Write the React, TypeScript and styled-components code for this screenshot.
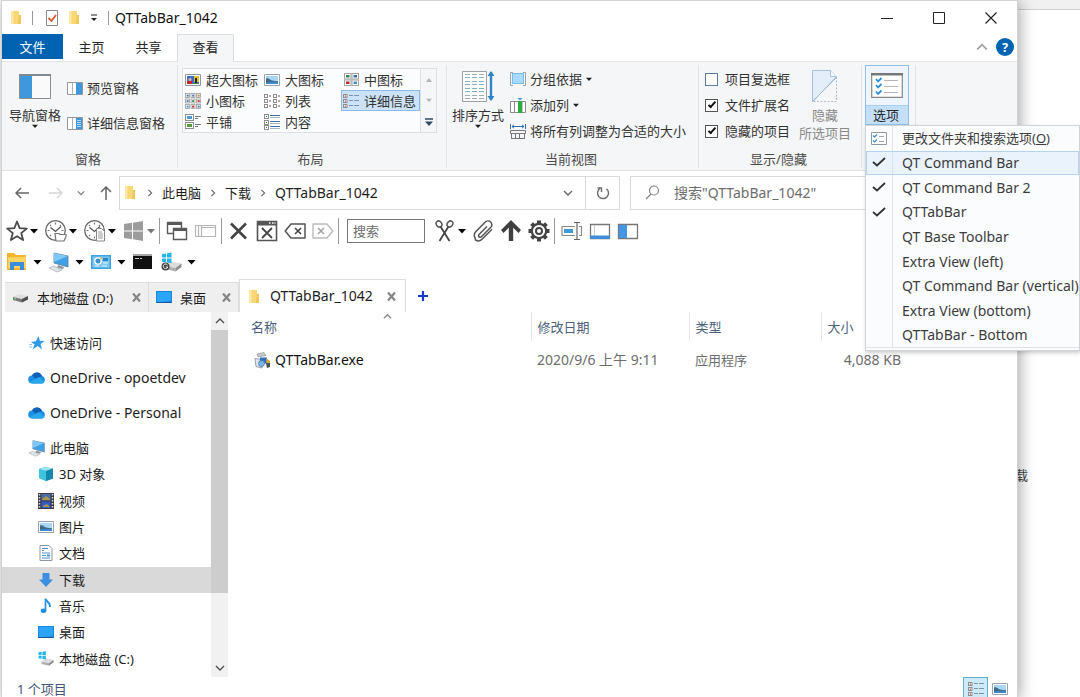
import React from "react";
import styled, { createGlobalStyle, css } from "styled-components";

const GlobalStyle = createGlobalStyle`
  *, *::before, *::after { box-sizing: border-box; }
  body {
    margin: 0;
    background: #fff;
    color: #262626;
    font-family: "Noto Sans", "Noto Sans CJK SC", sans-serif;
    font-size: 13px;
    line-height: 18px;
  }
  button, input { font: inherit; color: inherit; }
  button { border: 0; padding: 0; background: none; cursor: default; white-space: nowrap; }
  svg { display: block; flex: none; }
`;

/* ---------- frame ---------- */

const Desktop = styled.div`
  display: flex;
  height: 100vh;
  overflow: hidden;
  padding-left: 1px;
`;
const Window = styled.main`
  position: relative;
  z-index: 1;
  flex: 1;
  min-width: 0;
  display: flex;
  flex-direction: column;
  background: #fff;
  border: 1px solid #d2d2d2;
  border-bottom: 0;
  box-shadow: 2px 2px 14px rgba(0, 0, 0, 0.35);
`;
const Backdrop = styled.aside`
  width: 62px;
  display: flex;
  flex-direction: column;
  background: #fff;
`;
const BackdropBar = styled.div`
  height: 10px;
  background: #f1f1f1;
  border-bottom: 1px solid #cfcfcf;
`;
const BackdropText = styled.p`
  margin: 456px 0 0 -3px;
  color: #444;
`;

/* ---------- title bar ---------- */

const TitleBar = styled.header`
  display: flex;
  align-items: center;
  height: 33px;
  padding-left: 8px;
`;
const QuickAccess = styled.div`
  display: flex;
  align-items: center;
  gap: 10px;
`;
const TitleRule = styled.span`
  width: 1px;
  height: 14px;
  margin-right: 3px;
  background: #9a9a9a;
`;
const Title = styled.h1`
  margin: 0 auto 0 3px;
  font-size: 14px;
  font-weight: 400;
  color: #111;
`;
const CaptionButton = styled.button`
  display: grid;
  place-items: center;
  width: 52px;
  height: 33px;
`;

/* ---------- ribbon ---------- */

const RibbonTabs = styled.nav`
  display: flex;
  align-items: stretch;
  height: 28px;
  border-bottom: 1px solid #e3e4e5;
`;
const RibbonTab = styled.button<{ $kind?: "file" | "active" }>`
  width: 57px;
  height: 26px;
  ${(p) => p.$kind === "file" && css`
    width: 61px;
    height: 25px;
    background: #0063b1;
    color: #fff;
  `}
  ${(p) => p.$kind === "active" && css`
    height: 28px;
    padding-bottom: 3px;
    background: #f5f6f7;
    border: 1px solid #dcdddf;
    border-bottom: 0;
  `}
`;
const RibbonHelp = styled.div`
  display: flex;
  align-items: center;
  gap: 8px;
  margin-left: auto;
  padding: 0 3px 2px 0;
`;
const HelpButton = styled.button`
  width: 18px;
  height: 18px;
  border-radius: 50%;
  background: #0063b1;
  color: #fff;
  font-size: 13px;
  font-weight: 700;
  line-height: 18px;
`;
const Ribbon = styled.section`
  display: flex;
  height: 109px;
  padding: 3px 0 2px;
  background: #f5f6f7;
  border-bottom: 1px solid #dfe0e1;
`;
const Group = styled.div<{ $width: number }>`
  display: flex;
  flex-direction: column;
  justify-content: space-between;
  width: ${(p) => p.$width}px;
  border-right: 1px solid #e2e3e4;
`;
const GroupBody = styled.div<{ $pad?: number; $gap?: number }>`
  display: flex;
  align-items: flex-start;
  gap: ${(p) => p.$gap ?? 4}px;
  padding-left: ${(p) => p.$pad ?? 5}px;
`;
const GroupLabel = styled.h2`
  margin: 0;
  padding-right: 3px;
  font-size: 13px;
  font-weight: 400;
  text-align: center;
  color: #4a4a4a;
`;
const BigButton = styled.button<{ $dim?: boolean }>`
  display: flex;
  flex-direction: column;
  align-items: center;
  width: 56px;
  padding-top: 4px;
  color: ${(p) => (p.$dim ? "#8a8a8a" : "#333")};
`;
const BigIcon = styled.span`
  display: grid;
  place-items: center;
  height: 34px;
  margin-bottom: 3px;
`;
const SmallColumn = styled.div<{ $gap: number; $top: number }>`
  display: flex;
  flex-direction: column;
  align-items: flex-start;
  gap: ${(p) => p.$gap}px;
  padding-top: ${(p) => p.$top}px;
`;
const SmallButton = styled.button`
  display: flex;
  align-items: center;
  gap: 4px;
  height: 18px;
  color: #333;
`;
const Gallery = styled.div`
  display: flex;
  margin-top: 3px;
  border: 1px solid #dcdfe3;
  background: #fbfcfd;
`;
const GalleryGrid = styled.div`
  display: grid;
  grid-template-columns: repeat(3, 79px);
  grid-auto-rows: 21px;
`;
const GalleryItem = styled.button<{ $selected?: boolean }>`
  display: flex;
  align-items: center;
  gap: 5px;
  padding-left: 2px;
  color: #333;
  ${(p) => p.$selected && css`
    background: #cbe2f9;
    outline: 1px solid #8dbbe9;
    outline-offset: -1px;
  `}
`;
const GalleryScroll = styled.div`
  display: grid;
  grid-template-rows: repeat(3, 21px);
  width: 16px;
  border-left: 1px solid #dcdfe3;
  background: #f5f6f7;
  button { display: grid; place-items: center; }
`;
const CheckLabel = styled.label`
  display: flex;
  align-items: center;
  gap: 7px;
  height: 18px;
  color: #333;
`;
const CheckBox = styled.input`
  appearance: none;
  display: grid;
  place-items: center;
  width: 13px;
  height: 13px;
  margin: 0;
  border: 1px solid #5a7da0;
  background: #fff;
  &:checked { border-color: #555; }
  &:checked::after {
    content: "";
    width: 4px;
    height: 8px;
    margin-bottom: 2px;
    border: solid #111;
    border-width: 0 2px 2px 0;
    transform: rotate(42deg);
  }
`;
const OptionsAnchor = styled.div`
  position: relative;
  width: 44px;
`;
const OptionsButton = styled.button`
  display: flex;
  flex-direction: column;
  width: 44px;
  height: 60px;
  border: 1px solid #92bfea;
  background: #eef5fc;
`;
const OptionsIcon = styled.span`
  display: grid;
  place-items: center;
  width: 100%;
  height: 39px;
`;
const OptionsText = styled.span`
  width: 100%;
  height: 19px;
  padding-right: 2px;
  line-height: 18px;
  background: #c4dffa;
  border-top: 1px solid #a9cdf1;
`;
const Menu = styled.ul`
  position: absolute;
  z-index: 2;
  top: 100%;
  left: 0;
  display: grid;
  grid-template-rows: repeat(9, 1fr);
  width: 215px;
  height: 226px;
  margin: 0;
  padding: 0 0 2px;
  list-style: none;
  background: #fbfcfe;
  border: 1px solid #d0d4d8;
  box-shadow: 1px 2px 4px rgba(0, 0, 0, 0.2);
`;
const MenuItem = styled.li<{ $hot?: boolean }>`
  display: flex;
  outline: ${(p) => (p.$hot ? "1px solid #b5d3f0" : "0")};
  outline-offset: -1px;
  background: ${(p) => (p.$hot ? "#eaf2fb" : "transparent")};
  &:last-child { border-bottom: 1px solid #dfe2e6; }
`;
const MenuButton = styled.button<{ $latin?: boolean }>`
  display: flex;
  align-items: center;
  width: 100%;
  font-size: ${(p) => (p.$latin ? 14 : 13)}px;
  text-align: left;
  color: #3c3c3c;
`;
const MenuGutter = styled.span`
  display: grid;
  place-items: center;
  align-self: stretch;
  width: 27px;
  margin-right: 9px;
  border-right: 1px solid #dfe3e8;
`;

/* ---------- address row ---------- */

const AddressRow = styled.div`
  display: flex;
  align-items: center;
  height: 43px;
  padding: 0 8px 0 13px;
`;
const NavButtons = styled.div`
  display: flex;
  align-items: center;
  gap: 14px;
  margin-right: 6px;
  button:first-child { margin-right: 6px; }
`;
const AddressBox = styled.div`
  display: flex;
  align-items: center;
  flex: 1;
  height: 34px;
  padding-left: 4px;
  border: 1px solid #d9d9d9;
`;
const Crumbs = styled.div`
  display: flex;
  align-items: center;
  gap: 8px;
  flex: 1;
  padding-left: 10px;
  color: #1e1e1e;
`;
const Crumb = styled.span<{ $latin?: boolean }>`
  font-size: ${(p) => (p.$latin ? 14 : 13)}px;
`;
const AddressButton = styled.button<{ $divided?: boolean }>`
  display: grid;
  place-items: center;
  width: 34px;
  height: 32px;
  border-left: ${(p) => (p.$divided ? "1px solid #d9d9d9" : "0")};
`;
const SearchBox = styled.label`
  display: flex;
  align-items: center;
  gap: 14px;
  width: 379px;
  height: 34px;
  margin-left: 10px;
  padding-left: 14px;
  border: 1px solid #d9d9d9;
  font-size: 14px;
`;
const SearchInput = styled.input`
  flex: 1;
  min-width: 0;
  border: 0;
  padding: 0;
  outline: 0;
  background: none;
  &::placeholder { color: #6d6d6d; opacity: 1; }
`;

/* ---------- command bars ---------- */

const CommandBar = styled.div<{ $height: number; $gap?: number }>`
  display: flex;
  align-items: center;
  gap: ${(p) => p.$gap ?? 0}px;
  height: ${(p) => p.$height}px;
  padding-left: 4px;
`;
const ToolSet = styled.div<{ $gap: number }>`
  display: flex;
  align-items: center;
  gap: ${(p) => p.$gap}px;
`;
const ToolButton = styled.button<{ $gap?: number }>`
  display: flex;
  align-items: center;
  gap: ${(p) => p.$gap ?? 2}px;
  height: 24px;
`;
const ToolRule = styled.span`
  width: 1px;
  height: 26px;
  margin: 0 6px 0 4px;
  background: #9b9b9b;
`;
const ToolInput = styled.input`
  width: 78px;
  height: 24px;
  margin: 0 9px 0 2px;
  padding: 0 5px;
  border: 1px solid #777;
  background: #fff;
  &::placeholder { color: #6d6d6d; opacity: 1; }
`;

/* ---------- folder tabs ---------- */

const TabStrip = styled.div`
  display: flex;
  align-items: flex-end;
  height: 36px;
  padding-left: 3px;
`;
const FolderTab = styled.div<{ $width: number; $active?: boolean }>`
  display: flex;
  align-items: center;
  gap: ${(p) => (p.$active ? 10 : 8)}px;
  width: ${(p) => p.$width}px;
  height: ${(p) => (p.$active ? 33 : 30)}px;
  padding: 0 ${(p) => (p.$active ? "9px 0 8px" : "7px 0 7px")};
  background: ${(p) => (p.$active ? "#fff" : "#efefef")};
  border: 1px solid #dedede;
  border-bottom: 0;
  border-left-width: ${(p) => (p.$active ? 1 : 0)}px;
  font-size: ${(p) => (p.$active ? 14 : 13)}px;
  color: #1c1c1c;
`;
const TabName = styled.span`
  flex: 1;
  white-space: nowrap;
`;
const NewTab = styled.button`
  display: grid;
  place-items: center;
  width: 34px;
  height: 33px;
`;

/* ---------- body ---------- */

const Body = styled.div`
  display: flex;
  flex: 1;
  min-height: 0;
`;
const Sidebar = styled.nav`
  width: 209px;
  padding-top: 13px;
`;
const TreeList = styled.ul`
  margin: 0;
  padding: 0;
  list-style: none;
`;
const SubList = styled(TreeList)`
  display: grid;
  grid-template-rows: repeat(8, 1fr);
  height: 211px;
`;
const TreeItem = styled.a<{ $child?: boolean; $selected?: boolean; $latin?: boolean }>`
  display: flex;
  align-items: center;
  gap: ${(p) => (p.$child ? 5 : 4)}px;
  height: ${(p) => (p.$child ? "100%" : "35px")};
  padding-left: ${(p) => (p.$child ? 35 : 26)}px;
  background: ${(p) => (p.$selected ? "#d9d9d9" : "transparent")};
  font-size: ${(p) => (p.$latin ? 14 : 13)}px;
  color: #1c1c1c;
  text-decoration: none;
  white-space: nowrap;
`;
const LastRoot = styled.li`
  margin-bottom: -4px;
`;
const ScrollBar = styled.div`
  display: flex;
  flex-direction: column;
  width: 17px;
  background: #f1f1f1;
`;
const ScrollArrow = styled.button`
  display: grid;
  place-items: center;
  width: 17px;
  height: 18px;
`;
const ScrollThumb = styled.div`
  flex: 0 0 80%;
  background: #cdcdcd;
`;
const ScrollTrack = styled.div`
  display: flex;
  flex-direction: column;
  flex: 1;
`;
const Files = styled.section`
  flex: 1;
  min-width: 0;
`;
const FileTable = styled.table`
  width: 100%;
  table-layout: fixed;
  border-collapse: collapse;
`;
const HeadCell = styled.th<{ $width?: number; $first?: boolean }>`
  position: relative;
  width: ${(p) => (p.$width ? p.$width + "px" : "auto")};
  height: 29px;
  padding: 0 0 0 ${(p) => (p.$first ? 23 : 6)}px;
  border-right: ${(p) => (p.$width ? "1px solid #e5e5e5" : "0")};
  font-weight: 400;
  text-align: left;
  color: #4c607a;
`;
const SortMark = styled.span`
  position: absolute;
  top: 0;
  right: 139px;
`;
const Cell = styled.td<{ $right?: boolean; $first?: boolean; $latin?: boolean }>`
  height: 38px;
  padding: 0 6px 0 ${(p) => (p.$first ? 26 : 6)}px;
  font-size: ${(p) => (p.$latin ? 14 : 13)}px;
  text-align: ${(p) => (p.$right ? "right" : "left")};
  color: ${(p) => (p.$first ? "#111" : "#6d6d6d")};
  white-space: nowrap;
`;
const FileName = styled.span`
  display: flex;
  align-items: center;
  gap: 4px;
`;
const StatusBar = styled.footer`
  display: flex;
  align-items: flex-start;
  height: 20px;
  padding: 0 9px 0 15px;
  gap: 4px;
`;
const StatusText = styled.span`
  margin-right: auto;
  padding-top: 3px;
  color: #3f5573;
`;
const ViewButton = styled.button<{ $on?: boolean }>`
  display: grid;
  place-items: center;
  height: 24px;
  width: ${(p) => (p.$on ? 25 : 16)}px;
  border: ${(p) => (p.$on ? "1px solid #5fb0cf" : "0")};
  background: ${(p) => (p.$on ? "#cdebf7" : "none")};
`;

/* ---------- icons ---------- */

type SvgProps = { w: number; h?: number; box?: string; children: React.ReactNode };
const Svg = ({ w, h = w, box, children }: SvgProps) => (
  <svg width={w} height={h} viewBox={box ?? `0 0 ${w} ${h}`} fill="none" aria-hidden="true">
    {children}
  </svg>
);

const Caret = ({ color = "#000", size = 8 }: { color?: string; size?: number }) => (
  <Svg w={size} h={5} box="0 0 8 5"><path d="M0 0h8L4 4.6z" fill={color} /></Svg>
);
const MiniCaret = () => <Caret size={6} color="#222" />;
const Chevron = ({ dir, color = "#666", size = 10 }: { dir: "up" | "down" | "right"; color?: string; size?: number }) => (
  <Svg w={size} box="0 0 10 10">
    <path d={{ up: "M1 7l4-4 4 4", down: "M1 3l4 4 4-4", right: "M3 1l4 4-4 4" }[dir]} stroke={color} strokeWidth="1.4" />
  </Svg>
);
const FolderIcon = () => (
  <Svg w={12} h={15}>
    <path d="M1 1h8v4h2v9H1z" fill="#f8d775" />
    <path d="M1 1h2.5v13H1z" fill="#fbe7a6" />
    <path d="M9 5h2v9H8z" fill="#efc556" />
  </Svg>
);
const PropertiesIcon = () => (
  <Svg w={12} h={16}>
    <path d="M.5.5h11v15H.5z" fill="#fff" stroke="#8a8a8a" />
    <path d="M2.500 8l3 3 4.500-6" stroke="#d9532c" strokeWidth="1.800" />
  </Svg>
);
const CustomizeIcon = () => (
  <Svg w={8} h={8}><path d="M1 1h6" stroke="#222" /><path d="M1 4h6L4 7z" fill="#222" /></Svg>
);
const NavPaneIcon = () => (
  <Svg w={32} h={25}>
    <path d="M.5.5h31v24H.5z" fill="#fafafa" stroke="#8d8d8d" />
    <path d="M0 0h32v2H0z" fill="#7f8a92" />
    <path d="M1 2h12v22H1z" fill="#3f97dc" />
  </Svg>
);
const PaneIcon = ({ lines }: { lines?: boolean }) => (
  <Svg w={16} h={13}>
    <path d="M.5.5h15v12H.5z" fill="#fff" stroke="#8f989e" />
    <path d="M5.500 1v11" stroke="#a9b2b8" />
    <path d="M9 1h6v11H9z" fill="#3f97dc" />
    {lines && <path d="M10 3.500h4M10 5.500h4M10 7.500h4M10 9.500h4" stroke="#d4e9f9" strokeWidth=".8" />}
  </Svg>
);
const PictureIcon = () => (
  <Svg w={16} h={12}>
    <path d="M.5.5h15v11H.5z" fill="#fff" stroke="#98a2b3" />
    <path d="M2 2h12v8H2z" fill="#a9d6f5" />
    <path d="M2 4.500c3-1 4 1.500 6 2s4 .3 6 .8V9H2z" fill="#3d6b86" />
    <path d="M2 8.500c4-1 8-.5 12-.8V10H2z" fill="#3f86cc" />
  </Svg>
);
const ExtraLargeIcon = () => (
  <Svg w={16} h={12}>
    <path d="M.5.5h15v11H.5z" fill="#fff" stroke="#8a94a5" />
    <path d="M2 2h12v8H2z" fill="#3c6cc0" />
    <path d="M2 7h5v3H2z" fill="#c22a2a" />
    <circle cx="5" cy="5.500" r="1.500" fill="#e9b2a0" />
    <path d="M9 2h5v6H9z" fill="#e2c22c" />
    <path d="M10 4h2v6h-2z" fill="#222" />
    <path d="M8 9h6v1H8z" fill="#3d8f3a" />
  </Svg>
);
const tileColors = ["#4a78b8", "#4a78b8", "#b8862e", "#4a78b8", "#4a9a45", "#c03030", "#3f93d6", "#c03030", "#4a78b8"];
const SmallGridIcon = () => (
  <Svg w={16} h={16}>
    {tileColors.map((c, i) => {
      const x = (i % 3) * 5.5;
      const y = Math.floor(i / 3) * 5.5;
      return (
        <g key={i}>
          <rect x={x + 0.5} y={y + 0.5} width="4" height="4" fill="#fff" stroke="#9b9b9b" strokeWidth=".8" />
          <rect x={x + 1.6} y={y + 1.6} width="2" height="2" fill={c} />
        </g>
      );
    })}
  </Svg>
);
const MediumGridIcon = () => (
  <Svg w={15} h={13}>
    {["#2f8a4a", "#3f6fb0", "#c02828", "#3f8fc0"].map((c, i) => (
      <g key={i}>
        <rect x={(i % 2) * 7.5 + 0.5} y={Math.floor(i / 2) * 6.5 + 0.5} width="6.500" height="5.500" fill="#fff" stroke="#a5a5a5" />
        <rect x={(i % 2) * 7.5 + 2} y={Math.floor(i / 2) * 6.5 + 2} width="3.500" height="2.500" fill={c} />
      </g>
    ))}
  </Svg>
);
const ListIcon = () => (
  <Svg w={16} h={14}>
    {[0, 9].map((x) => [0, 5, 10].map((y) => (
      <g key={`${x}-${y}`}>
        <rect x={x + 0.5} y={y + 0.5} width="3" height="3" fill="#fff" stroke="#8d8d8d" />
        <path d={`M${x + 5} ${y + 2}h2`} stroke="#7a4a4a" />
      </g>
    )))}
  </Svg>
);
const DetailsIcon = () => (
  <Svg w={16} h={14}>
    {[0, 5, 10].map((y) => (
      <g key={y}>
        <rect x=".5" y={y + 0.5} width="3.500" height="3" fill="#fff" stroke="#8d8d8d" />
        <rect x="1.700" y={y + 1.5} width="1.200" height="1.200" fill="#b03a3a" />
        <path d={`M6 ${y + 1.5}h4M11 ${y + 1.5}h5`} stroke="#7c93ad" />
      </g>
    ))}
  </Svg>
);
const TilesIcon = () => (
  <Svg w={16} h={15}>
    <rect x=".5" y=".5" width="8" height="6" fill="#fff" stroke="#8d8d8d" />
    <rect x="2" y="2" width="5" height="3" fill="#4f9bd0" />
    <rect x=".5" y="8.500" width="8" height="6" fill="#fff" stroke="#8d8d8d" />
    <rect x="2" y="10" width="5" height="3" fill="#579c3c" />
    <path d="M10 2.500h6M10 4.500h3M10 10.500h6M10 12.500h3" stroke="#777" />
  </Svg>
);
const ContentIcon = () => (
  <Svg w={16} h={16}>
    {[0, 6, 11].map((y) => (
      <g key={y}>
        <rect x=".5" y={y + 0.5} width="4" height="4" fill="#fff" stroke="#8d8d8d" />
        <rect x="2" y={y + 2} width="1" height="1" fill="#555" />
        <path d={`M6 ${y + 1.5}h10`} stroke="#3f6fb0" />
        <path d={`M6 ${y + 3.5}h10`} stroke="#a8b6c6" />
      </g>
    ))}
  </Svg>
);
const SortIcon = () => (
  <Svg w={32} h={32}>
    <path d="M.5 1.500h24v30H.5z" fill="#fbfbfb" stroke="#a0a0a0" />
    {[4.5, 7.5, 11.5, 14.5, 18.5, 21.5, 25.5, 28.5].map((y) => (
      <path key={y} d={`M3 ${y}h5M10 ${y}h5M17 ${y}h5`} stroke={y > 5 && y < 24 ? "#7fb0cc" : "#a2adb2"} />
    ))}
    <path d="M29 2v28" stroke="#2f83c9" strokeWidth="2.400" />
    <path d="M25.500 6L29 1l3.500 5zM25.500 26l3.500 5 3.500-5z" fill="#2f83c9" />
  </Svg>
);
const GroupByIcon = () => (
  <Svg w={16} h={14}>
    <path d="M3 .5H.5v13H3M13 .5h2.500v13H13" stroke="#9aa4ab" />
    <rect x="2.500" y="1.500" width="11" height="10" fill="#a8dafc" stroke="#7cbbe8" />
  </Svg>
);
const AddColumnIcon = () => (
  <Svg w={16} h={15}>
    <path d="M.5 3.500h15v11H.5zM4.500 3.500v11M12 3.500v11" stroke="#8a8a8a" fill="#fff" />
    <path d="M8 3h4v12H8z" fill="#2cae3f" />
    <path d="M7.500 0h5L10 2.500z" fill="#3f97dc" />
  </Svg>
);
const FitColumnsIcon = () => (
  <Svg w={16} h={15}>
    <path d="M.5 0v5M15.500 0v5M2 2.500h12M4 .8L2 2.500l2 1.700M12 .8l2 1.700-2 1.700" stroke="#2f6ea8" />
    <path d="M.5 6.500h15v3H.5zM1.500 9v6M5.500 9v5.500M9.500 9v5.500M14.500 9v6M1 14.500h13" stroke="#777" />
  </Svg>
);
const HideItemIcon = () => (
  <Svg w={26} h={33}>
    <path d="M.5 32V.5h18l6 6z" fill="#e4eefa" stroke="#a9c1dc" />
    <path d="M18.500.5v6h6" stroke="#a9c1dc" fill="#f5f9fd" />
    <path d="M24.500 7v24.500H1" stroke="#b5bcc5" strokeDasharray="2 1.500" />
    <path d="M1 31L25 7" stroke="#a3b8cf" />
  </Svg>
);
const OptionsGlyph = ({ w, h }: { w: number; h: number }) => (
  <Svg w={w} h={h} box="0 0 32 25">
    <path d="M.7.7h30.600v23.600H.7z" fill="#fff" stroke="#888" strokeWidth="1.200" />
    <path d="M0 0h32v2.500H0z" fill="#777" />
    <path d="M5 6l2 2.500L10.500 5M5 12l2 2.500 3.500-3.500M5 18.500L7 21l3.500-3.500" stroke="#2f8bd8" strokeWidth="1.800" />
    <path d="M13 7.500h14M13 13.500h14M13 19.500h14" stroke="#b5b5b5" />
  </Svg>
);
const SmallOptionsGlyph = () => (
  <Svg w={16} h={13}>
    <path d="M.5.5h15v12H.5z" fill="#fff" stroke="#8f989e" />
    <path d="M2 3.500l1.500 1.500L6 2.500M2 8.500L3.500 10 6 7.500" stroke="#2f8bd8" strokeWidth="1.200" />
    <path d="M8 4.500h5M8 9.500h5" stroke="#a5a5a5" />
  </Svg>
);
const TickIcon = () => (
  <Svg w={14} h={11}><path d="M1 5l4 3.500L13 1" stroke="#333" strokeWidth="1.800" /></Svg>
);
const Arrow = ({ dir, color }: { dir: "left" | "right" | "up"; color: string }) => (
  <Svg w={14} h={14}>
    <path
      d={{ left: "M14 7H1M6 2L1 7l5 5", right: "M0 7h13M8 2l5 5-5 5", up: "M7 14V1M2 6l5-5 5 5" }[dir]}
      stroke={color}
      strokeWidth="1.500"
    />
  </Svg>
);
const RefreshIcon = () => (
  <Svg w={14} h={14}>
    <path d="M4 2.500a5.500 5.500 0 1 0 6.500.3" stroke="#6a6a6a" strokeWidth="1.400" />
    <path d="M1.500 2h4v4" stroke="#6a6a6a" strokeWidth="1.400" />
  </Svg>
);
const MagnifierIcon = () => (
  <Svg w={15} h={15}>
    <circle cx="9" cy="5.500" r="4.500" stroke="#848484" strokeWidth="1.200" />
    <path d="M6 9L1 14" stroke="#848484" strokeWidth="1.200" />
  </Svg>
);

const T = ({ children }: { children: React.ReactNode }) => <Svg w={22}>{children}</Svg>;
const StarOutline = () => (
  <T><path d="M11 1.500l2.600 6.700 7.200.4-5.600 4.500 1.900 7-6.100-3.900-6.100 3.900 1.900-7L1.200 8.600l7.200-.4z" stroke="#4b4b4b" strokeWidth="1.800" strokeLinejoin="round" /></T>
);
const ClockBase = () => (
  <>
    <circle cx="10.500" cy="10.500" r="9.800" stroke="#666" strokeWidth="1.300" fill="#fff" />
    <path d="M10.500 2.500v2M10.500 16.500v2M2.500 10.500h2M16.500 10.500h2M5 5l1 1M16 5l-1 1M5 16l1-1" stroke="#777" strokeWidth="1.200" />
    <path d="M5.500 7.500l5 4 5.500-5" stroke="#555" strokeWidth="1.300" />
  </>
);
const ClockFolder = () => (
  <T><ClockBase /><path d="M10 13.500h4l1 1h6v2l-2 4.500h-8z" fill="#fff" stroke="#777" strokeWidth="1.200" /></T>
);
const ClockFile = () => (
  <T><ClockBase /><path d="M12.500 8.500h5l3 3V21h-8z" fill="#fff" stroke="#888" /><path d="M14 12h4M14 14h5M14 16h5M14 18h5" stroke="#999" /></T>
);
const WindowsGray = () => (
  <T><path d="M1 4l8-1.200v7.700H1zM10 2.700L20 1v9.500H10zM1 11.500h8v7.700L1 18zM10 11.500h10V21l-10-1.700z" fill="#9c9c9c" /></T>
);
const CascadeIcon = () => (
  <T>
    <path d="M1.500 2.500h14v11h-14z" stroke="#5a5a5a" strokeWidth="1.400" fill="#fff" />
    <path d="M1 2h15v3H1z" fill="#5a5a5a" />
    <path d="M7.500 8.500h13v11h-13z" stroke="#5a5a5a" strokeWidth="1.400" fill="#fff" />
    <path d="M7 8h14v3H7z" fill="#5a5a5a" />
  </T>
);
const PanelGray = () => (
  <T><path d="M.5 5.500h20v11H.5zM3.500 5.500v11M6.500 5.500v11M7 7.500h13" stroke="#b5b5b5" strokeWidth="1.200" /></T>
);
const CrossIcon = () => (
  <T><path d="M3 3.500l15 15M18 3.500l-15 15" stroke="#444" strokeWidth="2.600" /></T>
);
const CloseWindowIcon = () => (
  <T>
    <path d="M1.500 1.500h19v19h-19z" stroke="#555" strokeWidth="1.600" />
    <path d="M1 1h20v4.500H1z" fill="#555" />
    <path d="M13 3h1.500M16 3h1.500M18.500 3h1" stroke="#fff" strokeWidth="1.300" />
    <path d="M6 8l10 10M16 8L6 18" stroke="#444" strokeWidth="1.800" />
  </T>
);
const TagLeft = () => (
  <T><path d="M7 4h14v14H7L1.200 11z" stroke="#555" strokeWidth="1.500" strokeLinejoin="round" /><path d="M11 8l6 6M17 8l-6 6" stroke="#444" strokeWidth="1.600" /></T>
);
const TagRight = () => (
  <T><path d="M15 4H1v14h14l5.800-7z" stroke="#bbb" strokeWidth="1.400" strokeLinejoin="round" /><path d="M6 8l6 6M12 8l-6 6" stroke="#a5a5a5" strokeWidth="1.600" /></T>
);
const ScissorsIcon = () => (
  <T>
    <ellipse cx="5" cy="4" rx="3.200" ry="2.600" transform="rotate(50 5 4)" stroke="#555" strokeWidth="1.500" />
    <ellipse cx="16" cy="4" rx="3.200" ry="2.600" transform="rotate(-50 16 4)" stroke="#555" strokeWidth="1.500" />
    <path d="M6.500 6.500l9 14.500M14.500 6.500l-9 14.500" stroke="#444" strokeWidth="1.800" />
  </T>
);
const ClipIcon = () => (
  <T><path d="M15 6.500l-8 8a1.600 1.600 0 0 0 2.400 2.300l9.400-9.500a3.700 3.700 0 0 0-5.500-5.200L3.500 12a4.800 4.800 0 0 0-.5 5.500l.5 2.500c1.600 1 4.500 1.200 6.500-.8l10-10" stroke="#555" strokeWidth="1.500" /></T>
);
const UpIcon = () => (
  <T><path d="M11 0l10 10-2.500 3-5.300-5.200V21H8.800V7.800L3.500 13 1 10z" fill="#404040" /></T>
);
const GearIcon = () => (
  <T>
    {[0, 45, 90, 135].map((a) => (
      <path key={a} d="M11 .5v21" stroke="#444" strokeWidth="4" transform={`rotate(${a} 11 11)`} />
    ))}
    <circle cx="11" cy="11" r="7.200" fill="#fff" stroke="#444" strokeWidth="2.200" />
    <circle cx="11" cy="11" r="3" stroke="#444" strokeWidth="2" />
  </T>
);
const RenameIcon = () => (
  <T>
    <path d="M14 6.500H1v9h13M18 6.500h2.500v9H18" stroke="#8a8a8a" strokeWidth="1.200" />
    <path d="M3 9h9v4H3z" fill="#3f97dc" />
    <path d="M13 2.500h6M13 19.500h6M16 2.500v17" stroke="#666" strokeWidth="1.200" />
  </T>
);
const BottomPaneIcon = () => (
  <T><path d="M1.500 4.500h19v14h-19z" stroke="#777" strokeWidth="1.300" fill="#fff" /><path d="M5.500 5v11" stroke="#ccc" /><path d="M1 15.500h20V19H1z" fill="#3f8fd6" /></T>
);
const LeftPaneIcon = () => (
  <T><path d="M1.500 4.500h19v14h-19z" stroke="#777" strokeWidth="1.300" fill="#fff" /><path d="M2 5h8v13H2z" fill="#3f97e6" /></T>
);
const ExplorerIcon = () => (
  <T><path d="M1 2h7l2 2h10v15H1z" fill="#f5b52e" /><path d="M2 6h18v11H2z" fill="#fcd462" /><path d="M4 19v-8h14v8h-4v-4H8v4z" fill="#3b8edb" /></T>
);
const ComputerIcon = ({ w = 22 }: { w?: number }) => (
  <Svg w={w} box="0 0 22 22">
    <path d="M6 2l14 3v11L6 12z" fill="#3fa0e6" stroke="#5d7d96" strokeWidth=".8" />
    <path d="M6 2l14 3-14 6z" fill="#7cc8f6" />
    <path d="M10 14l6 2-1 2-6-1z" fill="#8c98a3" />
    <path d="M1 17l5-2 8 4-5 2z" fill="#dfe4e8" stroke="#a7b0b8" strokeWidth=".7" />
  </Svg>
);
const ControlPanelIcon = () => (
  <T>
    <path d="M1 4h20v14H1z" fill="#3ea3e2" />
    <path d="M2.500 5.500h17v11h-17z" fill="#7cc8f2" />
    <circle cx="8" cy="10" r="3.200" stroke="#fff" strokeWidth="1.300" fill="#3c90cf" />
    <path d="M13 12h5M5 15h4M12 15h5" stroke="#e8f6fd" strokeWidth="1.200" />
    <path d="M13 7h5v3h-5z" fill="#2f86cc" />
    <path d="M10 6.500h2v2h-2z" fill="#f2c94c" />
  </T>
);
const TerminalIcon = () => (
  <T><path d="M1 3h19v15H1z" fill="#111" /><path d="M1 3h19v2H1z" fill="#a5a5a5" /><path d="M3 7.500h4M8 7.500h2" stroke="#ccc" /></T>
);
const DriveBody = () => (
  <>
    <path d="M6 15l6-4 9.500 1.500-6 4.500z" fill="#dcdcdc" />
    <path d="M6 15l9.500 2v3.500L6 18z" fill="#b0b0b0" />
    <path d="M15.500 17l6-4.500V16l-6 4.500z" fill="#8d8d8d" />
  </>
);
const SystemDriveIcon = ({ w = 22, badge }: { w?: number; badge?: boolean }) => (
  <Svg w={w} box="0 0 22 22">
    <DriveBody />
    <path d="M2 3l4-.6v4H2zM7 2.200l4.500-.7v4.900H7zM2 7.400h4v4l-4-.6zM7 7.400h4.500v4.900L7 11.600z" fill="#23b6ea" />
    {badge && <><circle cx="5.500" cy="15.500" r="4" fill="#444" /><path d="M7.500 14a2.300 2.300 0 1 0 .3 2H6" stroke="#fff" /></>}
  </Svg>
);
const DiskIcon = () => (
  <Svg w={17} h={11}>
    <path d="M1 5l6-3 9 2-6 3z" fill="#dedede" />
    <path d="M1 5l9 2v3.500L1 8z" fill="#7a7a7a" />
    <path d="M10 7l6-3v3.500l-6 3z" fill="#4d4d4d" />
    <path d="M2 6.500l2 .5" stroke="#7fe07a" />
  </Svg>
);
const DesktopIcon = () => (
  <Svg w={16} h={13}><path d="M0 0h16v12H0z" fill="#1c86dc" /><path d="M1 1h14v8.500L6 11H1z" fill="#2ba5f7" /><path d="M1 11.500h14" stroke="#125a9c" /></Svg>
);
const QuickStar = () => (
  <Svg w={16} h={16}><path d="M9.500 1l1.400 4.800 4.800.2-4.200 3L13 14.500 8.700 11l-5 3.500 2-4.900L2 7l4.800-.7z" fill="#2f9be8" /><path d="M0 9.500h3M0 12h3" stroke="#8cc8f2" /></Svg>
);
const CloudIcon = () => (
  <Svg w={18} h={13}>
    <path d="M4.500 12.500a4 4 0 0 1-.5-8A5.500 5.500 0 0 1 14 5a3.900 3.900 0 0 1 0 7.500z" fill="#1a8fe3" />
    <path d="M4 4.500A5.500 5.500 0 0 1 14 5L8 8z" fill="#0f5fb5" />
    <path d="M2 11l9-5 5.500 5a3 3 0 0 1-2.500 1.500H4.500A4 4 0 0 1 2 11z" fill="#28a8ea" />
  </Svg>
);
const CubeIcon = () => (
  <Svg w={16} h={16}><path d="M1 3l6-2 8 1.500v10L8 15 1 12z" fill="#2bb4d4" /><path d="M1 3l6-2 8 1.500L8 5z" fill="#9be4f0" /><path d="M8 5l7-2.500v10L8 15z" fill="#1688ad" /><path d="M1 3l7 2v10l-7-3z" fill="#3cc3de" /></Svg>
);
const VideoIcon = () => (
  <Svg w={16} h={16}>
    <path d="M0 0h16v16H0z" fill="#3a3d45" />
    <path d="M1.500 1v14M14.500 1v14" stroke="#d9d9d9" strokeWidth="1.500" strokeDasharray="1.500 1.500" />
    <path d="M3.500 1h9v6.500h-9z" fill="#4d6ca8" /><path d="M3.500 8.500h9V15h-9z" fill="#3458c4" />
    <path d="M4 6l4-3 4 3v1H4zM5 13l4-2 3 3H5z" fill="#a8974a" />
  </Svg>
);
const DocumentIcon = () => (
  <Svg w={14} h={16}><path d="M1 .5h9l3 3v12H1z" fill="#fff" stroke="#8b97a3" /><path d="M3 3.500h6M3 5.500h2M3 8h8M3 10.500h4M3 13h8" stroke="#4b94cf" /><path d="M8 10.500h3" stroke="#4b94cf" strokeWidth="2" /></Svg>
);
const DownloadIcon = () => (
  <Svg w={16} h={16}><path d="M4.500 1h7v6.500H15L8 15 1 7.500h3.500z" fill="#3b8ee0" /></Svg>
);
const MusicIcon = () => (
  <Svg w={16} h={16}><path d="M7.500.5c0 3 5 3.500 4.500 8.500" stroke="#1e8fe6" strokeWidth="1.800" /><path d="M7.500 1v12" stroke="#1e8fe6" strokeWidth="1.600" /><ellipse cx="5.500" cy="12.800" rx="2.800" ry="2.200" fill="#1e8fe6" /></Svg>
);
const SetupIcon = () => (
  <Svg w={17} h={17}>
    <path d="M3 2l7-1.500 2 3-8 1.500z" fill="#c4c8cc" stroke="#8a8f94" strokeWidth=".6" />
    <path d="M1 6.500l7 1V16l-6-1.500z" fill="#dfe7ee" stroke="#7f8b96" strokeWidth=".8" />
    <path d="M6 5.500h7v6H6z" fill="#2f6ec4" /><circle cx="7.500" cy="11.500" r="3" fill="#76b6e8" stroke="#4a6f94" strokeWidth=".7" />
    <path d="M12 6l4 3v5l-3 2z" fill="#d8a93a" /><path d="M12 11h4v4l-3 1z" fill="#4a4f55" />
  </Svg>
);
const TabClose = ({ label }: { label: string }) => (
  <button aria-label={`关闭 ${label}`}>
    <Svg w={9} h={9}><path d="M1 .5l7 8M8 .5l-7 8" stroke="#858585" strokeWidth="2.200" /></Svg>
  </button>
);

/* ---------- data ---------- */

const layouts = [
  { name: "超大图标", icon: <ExtraLargeIcon /> },
  { name: "大图标", icon: <PictureIcon /> },
  { name: "中图标", icon: <MediumGridIcon /> },
  { name: "小图标", icon: <SmallGridIcon /> },
  { name: "列表", icon: <ListIcon /> },
  { name: "详细信息", icon: <DetailsIcon />, selected: true },
  { name: "平铺", icon: <TilesIcon /> },
  { name: "内容", icon: <ContentIcon /> },
];

const menuItems = [
  { name: "QT Command Bar", on: true, hot: true },
  { name: "QT Command Bar 2", on: true },
  { name: "QTTabBar", on: true },
  { name: "QT Base Toolbar" },
  { name: "Extra View (left)" },
  { name: "QT Command Bar (vertical)" },
  { name: "Extra View (bottom)" },
  { name: "QTTabBar - Bottom" },
];

const roots = [
  { name: "快速访问", icon: <QuickStar /> },
  { name: "OneDrive - opoetdev", icon: <CloudIcon />, latin: true },
  { name: "OneDrive - Personal", icon: <CloudIcon />, latin: true },
];

const children = [
  { name: "3D 对象", icon: <CubeIcon /> },
  { name: "视频", icon: <VideoIcon /> },
  { name: "图片", icon: <PictureIcon /> },
  { name: "文档", icon: <DocumentIcon /> },
  { name: "下载", icon: <DownloadIcon />, selected: true },
  { name: "音乐", icon: <MusicIcon /> },
  { name: "桌面", icon: <DesktopIcon /> },
  { name: "本地磁盘 (C:)", icon: <SystemDriveIcon w={17} /> },
];

const IconSlot = styled.span<{ $width: number }>`
  display: grid;
  place-items: center;
  width: ${(p) => p.$width}px;
`;

/* ---------- sections ---------- */

const RibbonSection = () => (
  <Ribbon>
    <Group $width={176}>
      <GroupBody>
        <BigButton>
          <BigIcon><NavPaneIcon /></BigIcon>
          导航窗格
          <MiniCaret />
        </BigButton>
        <SmallColumn $gap={17} $top={14}>
          <SmallButton><PaneIcon />预览窗格</SmallButton>
          <SmallButton><PaneIcon lines />详细信息窗格</SmallButton>
        </SmallColumn>
      </GroupBody>
      <GroupLabel>窗格</GroupLabel>
    </Group>

    <Group $width={269}>
      <GroupBody $pad={4}>
        <Gallery>
          <GalleryGrid>
            {layouts.map((l) => (
              <GalleryItem key={l.name} $selected={l.selected}>
                <IconSlot $width={16}>{l.icon}</IconSlot>
                {l.name}
              </GalleryItem>
            ))}
          </GalleryGrid>
          <GalleryScroll>
            <button aria-label="向上"><Svg w={6} h={4}><path d="M0 4h6L3 0z" fill="#b5b5b5" /></Svg></button>
            <button aria-label="向下"><Caret size={6} color="#b5b5b5" /></button>
            <button aria-label="更多"><Svg w={8} h={8}><path d="M0 1h8" stroke="#2f4a63" strokeWidth="1.500" /><path d="M0 3.500h8L4 8z" fill="#2f4a63" /></Svg></button>
          </GalleryScroll>
        </Gallery>
      </GroupBody>
      <GroupLabel>布局</GroupLabel>
    </Group>

    <Group $width={252}>
      <GroupBody $pad={3}>
        <BigButton>
          <BigIcon><SortIcon /></BigIcon>
          排序方式
          <MiniCaret />
        </BigButton>
        <SmallColumn $gap={8} $top={5}>
          <SmallButton><GroupByIcon />分组依据<MiniCaret /></SmallButton>
          <SmallButton><AddColumnIcon />添加列<MiniCaret /></SmallButton>
          <SmallButton><FitColumnsIcon />将所有列调整为合适的大小</SmallButton>
        </SmallColumn>
      </GroupBody>
      <GroupLabel>当前视图</GroupLabel>
    </Group>

    <Group $width={163}>
      <GroupBody $pad={6} $gap={7}>
        <SmallColumn $gap={8} $top={5}>
          <CheckLabel><CheckBox type="checkbox" />项目复选框</CheckLabel>
          <CheckLabel><CheckBox type="checkbox" defaultChecked />文件扩展名</CheckLabel>
          <CheckLabel><CheckBox type="checkbox" defaultChecked />隐藏的项目</CheckLabel>
        </SmallColumn>
        <BigButton $dim>
          <BigIcon><HideItemIcon /></BigIcon>
          <span>隐藏<br />所选项目</span>
        </BigButton>
      </GroupBody>
      <GroupLabel>显示/隐藏</GroupLabel>
    </Group>

    <Group $width={54}>
      <GroupBody $pad={3}>
        <OptionsAnchor>
          <OptionsButton>
            <OptionsIcon><OptionsGlyph w={32} h={25} /></OptionsIcon>
            <OptionsText>选项</OptionsText>
          </OptionsButton>
          <Menu>
            <MenuItem>
              <MenuButton>
                <MenuGutter><SmallOptionsGlyph /></MenuGutter>
                <span>更改文件夹和搜索选项(<u>O</u>)</span>
              </MenuButton>
            </MenuItem>
            {menuItems.map((m) => (
              <MenuItem key={m.name} $hot={m.hot}>
                <MenuButton $latin>
                  <MenuGutter>{m.on && <TickIcon />}</MenuGutter>
                  {m.name}
                </MenuButton>
              </MenuItem>
            ))}
          </Menu>
        </OptionsAnchor>
      </GroupBody>
    </Group>
  </Ribbon>
);

const CommandBars = () => (
  <>
    <CommandBar $height={34}>
      <ToolSet $gap={7}>
        <ToolButton aria-label="收藏"><StarOutline /><Caret /></ToolButton>
        <ToolButton aria-label="最近的文件夹"><ClockFolder /><Caret /></ToolButton>
        <ToolButton aria-label="最近的文件"><ClockFile /><Caret /></ToolButton>
        <ToolButton aria-label="窗口"><WindowsGray /><Caret color="#777" /></ToolButton>
      </ToolSet>
      <ToolRule />
      <ToolSet $gap={7}>
        <ToolButton aria-label="克隆窗口"><CascadeIcon /></ToolButton>
        <ToolButton aria-label="工具栏"><PanelGray /></ToolButton>
      </ToolSet>
      <ToolRule />
      <ToolSet $gap={6}>
        <ToolButton aria-label="关闭"><CrossIcon /></ToolButton>
        <ToolButton aria-label="关闭窗口"><CloseWindowIcon /></ToolButton>
        <ToolButton aria-label="关闭左侧"><TagLeft /></ToolButton>
        <ToolButton aria-label="关闭右侧"><TagRight /></ToolButton>
      </ToolSet>
      <ToolRule />
      <ToolInput placeholder="搜索" aria-label="搜索" />
      <ToolSet $gap={6}>
        <ToolButton aria-label="剪切"><ScissorsIcon /><Caret /></ToolButton>
        <ToolButton aria-label="附件"><ClipIcon /></ToolButton>
        <ToolButton aria-label="上一级"><UpIcon /></ToolButton>
        <ToolButton aria-label="设置"><GearIcon /></ToolButton>
      </ToolSet>
      <ToolRule />
      <ToolSet $gap={6}>
        <ToolButton aria-label="重命名"><RenameIcon /></ToolButton>
        <ToolButton aria-label="底部窗格"><BottomPaneIcon /></ToolButton>
        <ToolButton aria-label="左侧窗格"><LeftPaneIcon /></ToolButton>
      </ToolSet>
    </CommandBar>
    <CommandBar $height={28} $gap={6}>
      <ToolButton $gap={5} aria-label="资源管理器"><ExplorerIcon /><Caret size={9} /></ToolButton>
      <ToolButton $gap={5} aria-label="电脑"><ComputerIcon /><Caret size={9} /></ToolButton>
      <ToolButton $gap={5} aria-label="控制面板"><ControlPanelIcon /><Caret size={9} /></ToolButton>
      <ToolButton aria-label="命令提示符"><TerminalIcon /></ToolButton>
      <ToolButton $gap={5} aria-label="驱动器"><SystemDriveIcon badge /><Caret size={9} /></ToolButton>
    </CommandBar>
  </>
);

export default function App() {
  return (
    <>
      <GlobalStyle />
      <Desktop>
        <Window>
          <TitleBar>
            <QuickAccess>
              <FolderIcon />
              <TitleRule />
              <PropertiesIcon />
              <FolderIcon />
              <CustomizeIcon />
              <TitleRule />
            </QuickAccess>
            <Title>QTTabBar_1042</Title>
            <CaptionButton aria-label="最小化"><Svg w={12}><path d="M0 6.500h12" stroke="#222" /></Svg></CaptionButton>
            <CaptionButton aria-label="最大化"><Svg w={12}><path d="M.5.5h11v11H.5z" stroke="#222" /></Svg></CaptionButton>
            <CaptionButton aria-label="关闭"><Svg w={12}><path d="M.5.5l11 11M11.500.5l-11 11" stroke="#222" strokeWidth="1.200" /></Svg></CaptionButton>
          </TitleBar>

          <RibbonTabs>
            <RibbonTab $kind="file">文件</RibbonTab>
            <RibbonTab>主页</RibbonTab>
            <RibbonTab>共享</RibbonTab>
            <RibbonTab $kind="active">查看</RibbonTab>
            <RibbonHelp>
              <Chevron dir="up" color="#a0a0a0" size={12} />
              <HelpButton>?</HelpButton>
            </RibbonHelp>
          </RibbonTabs>

          <RibbonSection />

          <AddressRow>
            <NavButtons>
              <button aria-label="后退"><Arrow dir="left" color="#666" /></button>
              <button aria-label="前进"><Arrow dir="right" color="#d5d5d5" /></button>
              <button aria-label="最近"><Chevron dir="down" color="#777" size={8} /></button>
              <button aria-label="向上"><Arrow dir="up" color="#666" /></button>
            </NavButtons>
            <AddressBox>
              <FolderIcon />
              <Crumbs>
                <Chevron dir="right" size={8} />
                <Crumb>此电脑</Crumb>
                <Chevron dir="right" size={8} />
                <Crumb>下载</Crumb>
                <Chevron dir="right" size={8} />
                <Crumb $latin>QTTabBar_1042</Crumb>
              </Crumbs>
              <AddressButton aria-label="历史"><Chevron dir="down" /></AddressButton>
              <AddressButton $divided aria-label="刷新"><RefreshIcon /></AddressButton>
            </AddressBox>
            <SearchBox>
              <MagnifierIcon />
              <SearchInput placeholder={'搜索"QTTabBar_1042"'} aria-label="搜索文件夹" />
            </SearchBox>
          </AddressRow>

          <CommandBars />

          <TabStrip>
            <FolderTab $width={144}><DiskIcon /><TabName>本地磁盘 (D:)</TabName><TabClose label="本地磁盘 (D:)" /></FolderTab>
            <FolderTab $width={90}><DesktopIcon /><TabName>桌面</TabName><TabClose label="桌面" /></FolderTab>
            <FolderTab $width={167} $active><FolderIcon /><TabName>QTTabBar_1042</TabName><TabClose label="QTTabBar_1042" /></FolderTab>
            <NewTab aria-label="新标签页"><Svg w={12}><path d="M6 1v10M1 6h10" stroke="#1438c8" strokeWidth="2.200" /></Svg></NewTab>
          </TabStrip>

          <Body>
            <Sidebar>
              <TreeList>
                {roots.map((r) => (
                  <li key={r.name}>
                    <TreeItem href="#" $latin={r.latin}><IconSlot $width={18}>{r.icon}</IconSlot>{r.name}</TreeItem>
                  </li>
                ))}
                <LastRoot>
                  <TreeItem href="#"><IconSlot $width={18}><ComputerIcon w={18} /></IconSlot>此电脑</TreeItem>
                </LastRoot>
              </TreeList>
              <SubList>
                {children.map((c) => (
                  <li key={c.name}>
                    <TreeItem href="#" $child $selected={c.selected}><IconSlot $width={17}>{c.icon}</IconSlot>{c.name}</TreeItem>
                  </li>
                ))}
              </SubList>
            </Sidebar>
            <ScrollBar>
              <ScrollArrow aria-label="向上滚动"><Chevron dir="up" color="#505050" /></ScrollArrow>
              <ScrollTrack><ScrollThumb /></ScrollTrack>
              <ScrollArrow aria-label="向下滚动"><Chevron dir="down" color="#505050" /></ScrollArrow>
            </ScrollBar>
            <Files>
              <FileTable>
                <thead>
                  <tr>
                    <HeadCell $width={303} $first>名称<SortMark><Chevron dir="up" color="#888" size={9} /></SortMark></HeadCell>
                    <HeadCell $width={158}>修改日期</HeadCell>
                    <HeadCell $width={132}>类型</HeadCell>
                    <HeadCell $width={86}>大小</HeadCell>
                    <HeadCell />
                  </tr>
                </thead>
                <tbody>
                  <tr>
                    <Cell $first $latin><FileName><SetupIcon />QTTabBar.exe</FileName></Cell>
                    <Cell $latin>2020/9/6 上午 9:11</Cell>
                    <Cell>应用程序</Cell>
                    <Cell $right $latin>4,088 KB</Cell>
                    <Cell />
                  </tr>
                </tbody>
              </FileTable>
            </Files>
          </Body>

          <StatusBar>
            <StatusText>1 个项目</StatusText>
            <ViewButton $on aria-label="详细信息视图"><DetailsIcon /></ViewButton>
            <ViewButton aria-label="大图标视图"><PictureIcon /></ViewButton>
          </StatusBar>
        </Window>
        <Backdrop>
          <BackdropBar />
          <BackdropText>载</BackdropText>
        </Backdrop>
      </Desktop>
    </>
  );
}
